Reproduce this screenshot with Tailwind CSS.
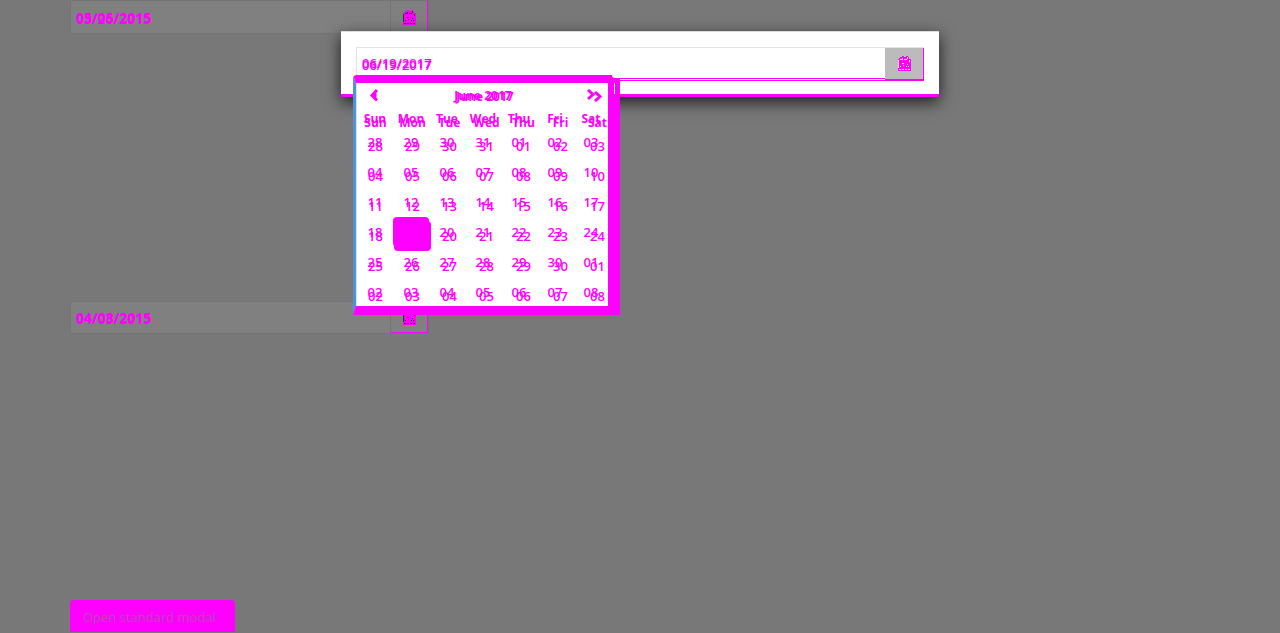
<!DOCTYPE html>
<html lang="en">
<head>
<meta charset="utf-8">
<meta name="viewport" content="width=device-width, initial-scale=1">
<title>Date picker</title>
<script src="https://cdn.jsdelivr.net/npm/@tailwindcss/browser@4"></script>
</head>
<body class="relative min-h-screen overflow-hidden bg-[#787878] font-['Open_Sans',sans-serif] text-sm text-[#f0f]">
<svg class="hidden">
  <symbol id="cal" viewBox="0 0 13 15">
    <path fill="#f0f" d="M2 1h2V0h2v1h2V0h2v1h1v2h2v12H0V3h1V2h1z"/>
    <path fill="none" stroke="currentColor" d="M.5 4v8M2 3.5h2M4.500 2v2M6 3.500h3M9.500 1v2M11.500 4v2M4 7.500h2M9 8.500h1M5 9.500h1M8 10.500h1M10 10.500h1M2 10.500h1M1 13.500h2M4 13.500h2M7 13.500h2M10 13.500h2"/>
  </symbol>
</svg>

<main class="flex flex-col items-start pl-[70px]">
  <div class="flex h-[34px] w-[359px] border border-[#747474] bg-[#808080]">
    <div class="relative flex-1">
      <input aria-label="First date" value="05/05/2015" class="h-full w-full pl-[5px] font-bold outline-none">
      <input aria-label="First date, second version" value="03/26/2015" class="absolute inset-x-0 top-px h-full w-full pl-[5px] font-semibold outline-none">
    </div>
    <button aria-label="Open first calendar" class="flex w-[38px] items-center justify-center border-l border-r border-l-[#747474] border-r-[#f0f] text-[#333]"><svg class="h-[15px] w-[13px]"><use href="#cal"/></svg></button>
  </div>
  <div class="mt-[267px] flex h-[33px] w-[359px] border border-[#747474] bg-[#808080]">
    <div class="relative flex-1">
      <input aria-label="Second date" value="04/08/2015" class="h-full w-full pl-[5px] font-bold outline-none">
      <input aria-label="Second date, second version" value="04/03/2015" class="absolute inset-x-0 top-px h-full w-full pl-[5px] font-semibold outline-none">
    </div>
    <button aria-label="Open second calendar" class="flex w-[38px] items-center justify-center border-r border-b border-l border-[#f0f] border-l-[#747474] text-[#333]"><svg class="h-[15px] w-[13px]"><use href="#cal"/></svg></button>
  </div>
  <button class="mt-[266px] h-8 w-[165px] rounded-t-sm bg-[#f0f] pt-[3px] pl-[13px] text-left text-[13px] whitespace-nowrap text-[#808080]/60">Open standard modal</button>
</main>

<section role="dialog" aria-label="Date" class="absolute inset-x-0 top-[31px] mx-auto h-[66px] w-[598px] border-t border-b-3 border-t-[#ddd] border-b-[#f0f] bg-white px-[15px] pt-[15px] shadow-[0_5px_15px_rgba(0,0,0,0.75)]">
  <div class="flex h-[34px] border-t border-l border-[#e3e3e3]">
    <div class="relative flex-1 border-b border-[#f0f]">
      <input aria-label="Selected date" value="06/19/2017" class="h-[31px] w-full border-b border-[#f0f] pl-[5px] text-[13px] font-semibold outline-none">
      <input aria-label="Selected date, second version" value="06/19/2017" class="absolute inset-x-0 top-px h-8 w-full pl-[5px] text-[13px] font-semibold outline-none">
    </div>
    <button aria-label="Toggle calendar" class="flex w-[39px] items-center justify-center border-r border-b-2 border-[#f0f] bg-[#bbb] text-[#eee]"><svg class="h-[15px] w-[13px]"><use href="#cal"/></svg></button>
  </div>

  <div class="absolute top-[43px] left-[12px] h-[240px] w-[267px] rounded-t border-t-8 border-r-12 border-b-9 border-l-3 border-[#f0f] border-l-[#5391d2] bg-white">
    <div class="absolute -top-2 -right-3 h-[3px] w-2 rounded-bl bg-white"></div>
    <div class="absolute top-0 -right-[7px] h-[11px] w-px bg-white"></div>
    <div class="relative h-full border-l border-[#cde6fb]">
      <div class="flex h-[27px] items-center justify-between pr-[6px] pb-[2px] pl-3">
        <button aria-label="Previous month"><svg class="h-[13px] w-[10px]" viewBox="0 0 10 13" fill="none" stroke="#f0f" stroke-width="3"><path d="M8 1L3 6.500l5 5M6 3v7"/></svg></button>
        <div class="relative text-[12px] font-bold">June 2017<span class="absolute top-px left-[2px] whitespace-nowrap">June 2017</span></div>
        <button aria-label="Next month"><svg class="h-[13px] w-[15px]" viewBox="0 0 15 13" fill="none" stroke="#f0f" stroke-width="3"><path d="M1 1l5 4.500-5 4.500M8 3l5 4.500-5 4.500"/></svg></button>
      </div>
      <div id="dates" class="relative"></div>
    </div>
  </div>
</section>
<script>
const names = ['Sun','Mon','Tue','Wed','Thu','Fri','Sat'];
const days = [28,29,30,31,...Array.from({length:30},(_,i)=>i+1),1,2,3,4,5,6,7,8];
function table(tableClass) {
  let html = `<table class="${tableClass}"><thead><tr class="h-[17px] text-[12px]">` + names.map(n => `<th class="p-0 font-bold">${n}</th>`).join('') + '</tr></thead><tbody>';
  for (let r = 0; r < 6; r++) {
    html += '<tr class="h-[30px]">' + days.slice(r*7,r*7+7).map(d => `<td class="p-0 text-center font-semibold ${r===3&&d===19?'rounded-sm bg-[#f0f]':''}">${String(d).padStart(2,'0')}</td>`).join('') + '</tr>';
  }
  return html + '</tbody></table>';
}
document.getElementById('dates').innerHTML = table('w-[252px] table-fixed text-[13px] leading-4') + table('absolute top-1 left-0 w-[259px] table-fixed text-[13px] leading-4');
</script>
</body>
</html>
